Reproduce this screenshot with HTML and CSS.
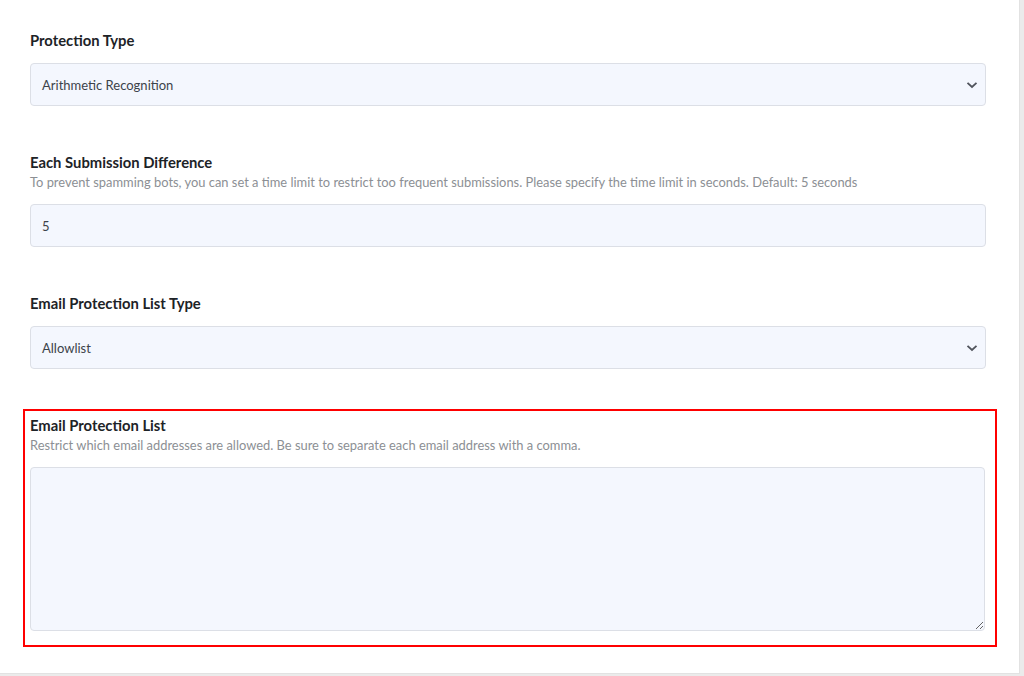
FILE: index.html
```html
<!DOCTYPE html>
<html lang="en">
<head>
<meta charset="utf-8">
<title>Protection settings</title>
<link rel="stylesheet" href="styles.css">
</head>
<body>
<div class="panel">
  <div class="form-item">
    <div class="label">Protection Type</div>
    <div class="select">
      <span>Arithmetic Recognition</span>
      <svg class="chevron" width="12" height="8" viewBox="0 0 12 8"><path d="M1.5 1.8 L6 6 L10.5 1.8" fill="none" stroke="#50545c" stroke-width="1.8"/></svg>
    </div>
  </div>
  <div class="form-item">
    <div class="label">Each Submission Difference</div>
    <div class="help">To prevent spamming bots, you can set a time limit to restrict too frequent submissions. Please specify the time limit in seconds. Default: 5 seconds</div>
    <div class="input">5</div>
  </div>
  <div class="form-item">
    <div class="label">Email Protection List Type</div>
    <div class="select">
      <span>Allowlist</span>
      <svg class="chevron" width="12" height="8" viewBox="0 0 12 8"><path d="M1.5 1.8 L6 6 L10.5 1.8" fill="none" stroke="#50545c" stroke-width="1.8"/></svg>
    </div>
  </div>
  <div class="form-item highlight">
    <div class="label">Email Protection List</div>
    <div class="help">Restrict which email addresses are allowed. Be sure to separate each email address with a comma.</div>
    <textarea class="textarea"></textarea>
  </div>
</div>
</body>
</html>
```
FILE: styles.css
```css
html, body {
  margin: 0;
  padding: 0;
}
body {
  background: #ebebeb;
  font-family: Lato, "Open Sans", "Liberation Sans", sans-serif;
  width: 1024px;
  height: 676px;
  overflow: hidden;
}
.panel {
  box-sizing: border-box;
  width: 1020px;
  height: 674px;
  background: #ffffff;
  border-right: 1px solid #e2e2e2;
  border-bottom: 1px solid #e2e2e2;
  padding: 30px 33px 0 30px;
}
.form-item {
  margin-bottom: 46px;
}
.label {
  font-size: 14.8px;
  font-weight: 700;
  line-height: 20px;
  color: #1d2327;
}
.help {
  font-size: 12.9px;
  line-height: 20px;
  color: #8c8f94;
  margin-top: 0;
}
.form-item > .label + .select,
.form-item > .label + .input {
  margin-top: 13px;
}
.help + .input,
.help + .textarea {
  margin-top: 12px;
}
.select, .input {
  box-sizing: border-box;
  height: 43px;
  border: 1px solid #dcdfe6;
  border-radius: 4px;
  background: #f4f7fe;
  display: flex;
  align-items: center;
  justify-content: space-between;
  padding: 0 7px 0 11px;
  font-size: 13px;
  color: #3c434a;
}
.chevron {
  display: block;
}
.highlight {
  border: 2px solid #ff0000;
  margin: -6px -11px 0 -7px;
  padding: 4px 10px 14px 5px;
}
.textarea {
  display: block;
  box-sizing: border-box;
  width: 100%;
  height: 164px;
  margin: 12px 0 0 0;
  border: 1px solid #dcdfe6;
  border-radius: 4px;
  background: #f4f7fe;
  font-family: inherit;
  font-size: 13px;
  resize: vertical;
  outline: none;
}
```
